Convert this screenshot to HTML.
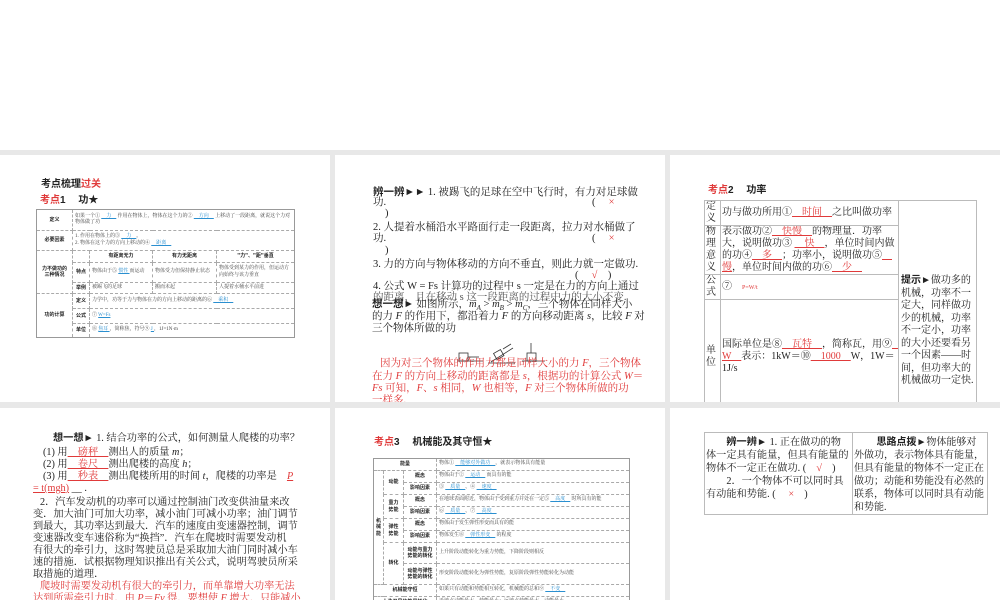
<!DOCTYPE html>
<html><head><meta charset="utf-8">
<style>
*{margin:0;padding:0;box-sizing:border-box}
body{width:1000px;height:600px;position:relative;background:#fff;overflow:hidden;font-family:"Liberation Serif","Noto Serif CJK SC","Noto Sans CJK SC",serif;color:#222}
.g{position:absolute;background:#e8e8e8}
.s{position:absolute;background:#fff;overflow:hidden}
.a{position:absolute;white-space:nowrap}
.r{color:#e03a3a}
.b{color:#2a8fd0}
.u{text-decoration:underline}
.bold{font-weight:bold;font-family:"Liberation Sans","Noto Sans CJK SC",sans-serif}
table{border-collapse:collapse;position:absolute;table-layout:fixed}
.t1 td{border:1px dashed #aaa;font-size:5px;line-height:6.5px;padding:1px 2px;color:#444;overflow:hidden}
.t1{border:1px solid #999}
.t1 td.h{font-weight:bold;text-align:center;font-family:"Noto Sans CJK SC",sans-serif;color:#222}
.t3 td{border:1px solid #bbb;font-size:10px;line-height:12px;padding:0 1px;vertical-align:middle;overflow:hidden}
</style></head><body>
<div class="g" style="left:0;top:150px;width:1000px;height:5px"></div>
<div class="g" style="left:0;top:402px;width:1000px;height:6px"></div>
<div class="g" style="left:330px;top:150px;width:5px;height:450px"></div>
<div class="g" style="left:665px;top:150px;width:5px;height:450px"></div>

<!-- slide 1 -->
<div class="s" style="left:0;top:155px;width:330px;height:247px">
 <div class="a bold" style="left:41px;top:20px;font-size:10px">考点梳理<span class="r">过关</span></div>
 <div class="a bold" style="left:40px;top:36px;font-size:10px"><span class="r">考点</span>1　 功★</div>
 <table class="t1" style="left:36px;top:54px;width:259px;height:128px">
  <colgroup><col style="width:36px"><col style="width:17px"><col style="width:63px"><col style="width:64px"><col></colgroup>
  <tr style="height:21px"><td class="h">定义</td><td colspan="4">如果一个① <span class="b u">　力　</span> 作用在物体上，物体在这个力的② <span class="b u">　方向　</span> 上移动了一段距离，就说这个力对物体做了功</td></tr>
  <tr style="height:20px"><td class="h">必要因素</td><td colspan="4">1. 作用在物体上的③ <span class="b u">　力　</span>。<br>2. 物体在这个力的方向上移动的④ <span class="b u">　距离　</span></td></tr>
  <tr style="height:12px"><td class="h" rowspan="3">力不做功的<br>三种情况</td><td></td><td class="h">有距离无力</td><td class="h">有力无距离</td><td class="h">"力"、"距"垂直</td></tr>
  <tr style="height:20px"><td class="h">特点</td><td>物体由于⑤ <span class="b u"> 惯性 </span> 而运动</td><td>物体受力但保持静止状态</td><td>物体受到某力的作用，但运动方向始终与该力垂直</td></tr>
  <tr style="height:11px"><td class="h">举例</td><td>被踢飞的足球</td><td>搬而未起</td><td>人提着水桶水平前进</td></tr>
  <tr style="height:15px"><td class="h" rowspan="3">功的计算</td><td class="h">定义</td><td colspan="3">力学中，功等于力与物体在力的方向上移动的距离的⑥ <span class="b u">　乘积　</span></td></tr>
  <tr style="height:15px"><td class="h">公式</td><td colspan="3">⑦ <span class="b u"> W=Fs </span></td></tr>
  <tr style="height:14px"><td class="h">单位</td><td colspan="3">⑧ <span class="b u"> 焦耳 </span>，简称焦，符号⑨ <span class="b u"> J </span>，1J=1N·m</td></tr>
 </table>
</div>

<!-- slide 2 -->
<div class="s" style="left:335px;top:155px;width:330px;height:247px;font-size:10.5px;line-height:12px">
 <div class="a" style="left:38px;top:31px"><b class="bold">辨一辨►►</b> 1. 被踢飞的足球在空中飞行时，有力对足球做</div>
 <div class="a" style="left:38px;top:42px">功.</div><div class="a" style="left:257px;top:42px">(　 <span class="r">×</span></div>
 <div class="a" style="left:50px;top:53px">)</div>
 <div class="a" style="left:38px;top:67px">2. 人提着水桶沿水平路面行走一段距离，拉力对水桶做了</div>
 <div class="a" style="left:38px;top:78px">功.</div><div class="a" style="left:257px;top:78px">(　 <span class="r">×</span></div>
 <div class="a" style="left:50px;top:90px">)</div>
 <div class="a" style="left:38px;top:104px">3. 力的方向与物体移动的方向不垂直，则此力就一定做功.</div>
 <div class="a" style="left:240px;top:115px">(　 <span class="r">√</span>　)</div>
 <div class="a" style="left:38px;top:126px">4. 公式 W = Fs 计算功的过程中 s 一定是在力的方向上通过</div>
 <div class="a" style="left:38px;top:137px;color:#555">的距离，且在移动 s 这一段距离的过程中力的大小不变.</div>
 <div class="a" style="left:37px;top:143px"><b class="bold">想一想►</b> 如图所示，<i>m<sub style="font-size:7px">A</sub></i> &gt; <i>m<sub style="font-size:7px">B</sub></i> &gt; <i>m<sub style="font-size:7px">C</sub></i>，三个物体在同样大小</div>
 <div class="a" style="left:37px;top:156px">的力 <i>F</i> 的作用下，都沿着力 <i>F</i> 的方向移动距离 <i>s</i>，比较 <i>F</i> 对</div>
 <div class="a" style="left:37px;top:168px">三个物体所做的功</div>
 <svg class="a" style="left:120px;top:180px" width="95" height="30" viewBox="0 0 95 30" fill="none" stroke="#333" stroke-width="0.8">
  <line x1="2" y1="26" x2="28" y2="26"/><rect x="4" y="18" width="9" height="8"/><line x1="13" y1="22" x2="24" y2="22"/>
  <line x1="33" y1="28" x2="60" y2="28"/><line x1="36" y1="27" x2="58" y2="13"/><rect x="40" y="16" width="8" height="7" transform="rotate(-30 44 20)"/><line x1="48" y1="14" x2="56" y2="9"/>
  <line x1="67" y1="26" x2="90" y2="26"/><rect x="72" y="18" width="9" height="8"/><line x1="76" y1="18" x2="76" y2="8"/>
 </svg>
 <div class="a r" style="left:45px;top:203px">因为对三个物体的作用力都是同样大小的力 <i>F</i>，三个物体</div>
 <div class="a r" style="left:37px;top:216px">在力 <i>F</i> 的方向上移动的距离都是 <i>s</i>，根据功的计算公式 <i>W</i>＝</div>
 <div class="a r" style="left:37px;top:228px"><i>Fs</i> 可知，<i>F</i>、<i>s</i> 相同，<i>W</i> 也相等，<i>F</i> 对三个物体所做的功</div>
 <div class="a r" style="left:37px;top:240px">一样多.</div>
</div>

<!-- slide 3 -->
<div class="s" style="left:670px;top:155px;width:330px;height:247px">
 <div class="a bold" style="left:38px;top:26px;font-size:10px"><span class="r">考点</span>2　 功率</div>
 <table class="t3" style="left:34px;top:45px;width:273px;height:215px">
  <colgroup><col style="width:16px"><col style="width:178px"><col></colgroup>
  <tr style="height:25px"><td>定义</td><td style="white-space:nowrap">功与做功所用①<span class="r u">　时间　</span>之比叫做功率</td><td rowspan="4" style="font-size:10px;line-height:12.5px;padding:0 2px;vertical-align:top;padding-top:74px"><b class="bold">提示►</b>做功多的机械，功率不一定大，同样做功少的机械，功率不一定小，功率的大小还要看另一个因素——时间，但功率大的机械做功一定快.</td></tr>
  <tr style="height:48px"><td>物理意义</td><td>表示做功②<span class="r u">　快慢　</span>的物理量．功率大，说明做功③ <span class="r u">　快　</span>，单位时间内做的功④<span class="r u">　多　</span>；功率小，说明做功⑤<span class="r u">　慢</span>，单位时间内做的功⑥<span class="r u">　少　</span></td></tr>
  <tr style="height:24px"><td>公式</td><td>⑦　<span class="r" style="font-size:6px">P=W/t</span></td></tr>
  <tr><td>单位</td><td>国际单位是⑧<span class="r u">　瓦特　</span>，简称瓦，用⑨<span class="r u">　W　</span>表示：1kW＝⑩<span class="r u">　1000　</span>W，1W＝1J/s</td></tr>
 </table>
</div>

<!-- slide 4 -->
<div class="s" style="left:0;top:408px;width:330px;height:192px;font-size:10.2px;line-height:12px">
 <div class="a" style="left:53px;top:25px"><b class="bold">想一想►</b> 1. 结合功率的公式，如何测量人爬楼的功率？</div>
 <div class="a" style="left:43px;top:39px">(1) 用<span class="r u">　磅秤　</span>测出人的质量 <i>m</i>；</div>
 <div class="a" style="left:43px;top:51px">(2) 用<span class="r u">　卷尺　</span>测出爬楼的高度 <i>h</i>；</div>
 <div class="a" style="left:43px;top:63px">(3) 用<span class="r u">　秒表　</span>测出爬楼所用的时间 <i>t</i>，爬楼的功率是　<span class="r u"><i>P</i></span></div>
 <div class="a r" style="left:33px;top:75px"><span class="u">= t(mgh)</span> <span style="color:#222">__ .</span></div>
 <div class="a" style="left:40px;top:89px">2．汽车发动机的功率可以通过控制油门改变供油量来改</div>
 <div class="a" style="left:33px;top:101px">变．加大油门可加大功率，减小油门可减小功率；油门调节</div>
 <div class="a" style="left:33px;top:113px">到最大，其功率达到最大．汽车的速度由变速器控制，调节</div>
 <div class="a" style="left:33px;top:125px">变速器改变车速俗称为“换挡”．汽车在爬坡时需要发动机</div>
 <div class="a" style="left:33px;top:137px">有很大的牵引力，这时驾驶员总是采取加大油门同时减小车</div>
 <div class="a" style="left:33px;top:149px">速的措施．试根据物理知识推出有关公式，说明驾驶员所采</div>
 <div class="a" style="left:33px;top:161px">取措施的道理．</div>
 <div class="a r" style="left:40px;top:173px">爬坡时需要发动机有很大的牵引力，而单靠增大功率无法</div>
 <div class="a r" style="left:33px;top:185px">达到所需牵引力时，由 <i>P</i>＝<i>Fv</i> 得，要想使 <i>F</i> 增大，只能减小</div>
</div>

<!-- slide 5 -->
<div class="s" style="left:335px;top:408px;width:330px;height:192px">
 <div class="a bold" style="left:39px;top:25px;font-size:10px"><span class="r">考点</span>3　 机械能及其守恒★</div>
 <table class="t1" style="left:38px;top:50px;width:257px">
  <colgroup><col style="width:10px"><col style="width:20px"><col style="width:33px"><col></colgroup>
  <tr style="height:12px"><td class="h" colspan="3">能量</td><td>物体① <span class="b u">　能够对外做功　</span>，就表示物体具有能量</td></tr>
  <tr style="height:12px"><td class="h" rowspan="8">机<br>械<br>能</td><td class="h" rowspan="2">动能</td><td class="h">概念</td><td>物体由于② <span class="b u">　运动　</span> 而具有的能</td></tr>
  <tr style="height:12px"><td class="h">影响因素</td><td>③ <span class="b u">　质量　</span>、④ <span class="b u">　速度　</span></td></tr>
  <tr style="height:12px"><td class="h" rowspan="2">重力<br>势能</td><td class="h">概念</td><td>在地球表面附近，物体由于受到重力并处在一定⑤ <span class="b u">　高度　</span> 时所具有的能</td></tr>
  <tr style="height:12px"><td class="h">影响因素</td><td>⑥ <span class="b u">　质量　</span>、⑦ <span class="b u">　高度　</span></td></tr>
  <tr style="height:12px"><td class="h" rowspan="2">弹性<br>势能</td><td class="h">概念</td><td>物体由于发生弹性形变而具有的能</td></tr>
  <tr style="height:12px"><td class="h">影响因素</td><td>物体发生⑧ <span class="b u">　弹性形变　</span> 的程度</td></tr>
  <tr style="height:21px"><td class="h" rowspan="2">转化</td><td class="h">动能与重力<br>势能的转化</td><td>上升阶段动能转化为重力势能，下降阶段则相反</td></tr>
  <tr style="height:21px"><td class="h">动能与弹性<br>势能的转化</td><td>形变阶段动能转化为弹性势能，复原阶段弹性势能转化为动能</td></tr>
  <tr style="height:12px"><td class="h" colspan="3">机械能守恒</td><td>如果只有动能和势能相互转化，机械能的总和⑨ <span class="b u">　不变　</span></td></tr>
  <tr style="height:12px"><td class="h" colspan="3">人造卫星的能量转化</td><td>近地点动能最大，势能最小；远地点势能最大，动能最小</td></tr>
 </table>
</div>

<!-- slide 6 -->
<div class="s" style="left:670px;top:408px;width:330px;height:192px">
 <table class="t3" style="left:34px;top:24px;width:284px;height:72px">
  <colgroup><col style="width:148px"><col></colgroup>
  <tr><td style="vertical-align:top;padding-top:3px;line-height:13px;font-size:10.2px">　　<b class="bold">辨一辨►</b> 1. 正在做功的物体一定具有能量，但具有能量的物体不一定正在做功. (　<span class="r">√</span>　)<br>　　2．一个物体不可以同时具有动能和势能. (　 <span class="r">×</span>　)</td>
  <td style="vertical-align:top;padding-top:3px;font-size:10px;line-height:13px">　　 <b class="bold">思路点拨►</b>物体能够对外做功，表示物体具有能量，但具有能量的物体不一定正在做功；动能和势能没有必然的联系，物体可以同时具有动能和势能.</td></tr>
 </table>
</div>
</body></html>
